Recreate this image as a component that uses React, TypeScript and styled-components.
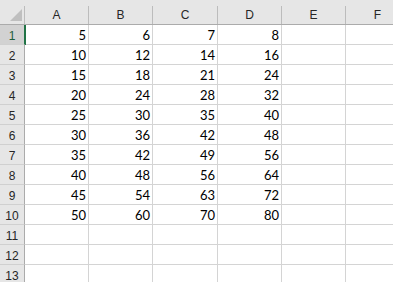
import styled, { createGlobalStyle } from "styled-components";

const GlobalStyle = createGlobalStyle`
  html, body {
    margin: 0;
    padding: 0;
    background: #ffffff;
    overflow: hidden;
  }
`;

const COLUMNS = [
  { label: "A", width: 64 },
  { label: "B", width: 64 },
  { label: "C", width: 65 },
  { label: "D", width: 64 },
  { label: "E", width: 64 },
  { label: "F", width: 64 },
];

const ROW_COUNT = 13;
const ACTIVE_ROW = 1;

// multiples of 5, 6, 7 and 8 in columns A to D
const cellValue = (row: number, col: number) =>
  row <= 10 && col < 4 ? String((col + 5) * row) : "";

export default function App() {
  const rows = Array.from({ length: ROW_COUNT }, (_, i) => i + 1);

  return (
    <>
      <GlobalStyle />
      <Sheet>
        <HeaderBar>
          <Corner>
            <SelectAll />
          </Corner>
          {COLUMNS.map((c) => (
            <ColHead key={c.label} $width={c.width}>
              {c.label}
            </ColHead>
          ))}
        </HeaderBar>
        {rows.map((r) => (
          <Row key={r}>
            <RowHead $active={r === ACTIVE_ROW}>{r}</RowHead>
            {COLUMNS.map((c, ci) => (
              <Cell key={c.label} $width={c.width}>
                {cellValue(r, ci)}
              </Cell>
            ))}
          </Row>
        ))}
      </Sheet>
    </>
  );
}

const Sheet = styled.div`
  width: 393px;
  height: 282px;
  overflow: hidden;
  display: flex;
  flex-direction: column;
  background: #ffffff;
`;

const HeaderBar = styled.div`
  display: flex;
  align-items: flex-end;
  flex: none;
  height: 25px;
  box-sizing: border-box;
  background: #e6e6e6;
  border-bottom: 1px solid #ababab;
`;

const Corner = styled.div`
  flex: none;
  width: 25px;
  height: 18px;
  box-sizing: border-box;
  border-right: 1px solid #bcbcbc;
  display: flex;
  align-items: flex-end;
  justify-content: flex-end;
  padding: 0 2px 3px 0;
`;

const SelectAll = styled.div`
  width: 0;
  height: 0;
  border-left: 12px solid transparent;
  border-bottom: 12px solid #bfbfbf;
`;

const ColHead = styled.div<{ $width: number }>`
  flex: none;
  width: ${(p) => p.$width}px;
  height: 18px;
  box-sizing: border-box;
  border-right: 1px solid #bcbcbc;
  display: flex;
  align-items: center;
  justify-content: center;
  font-family: "Liberation Sans", Arial, sans-serif;
  font-size: 12px;
  color: #262626;
  padding-bottom: 1px;
`;

const Row = styled.div`
  display: flex;
  flex: none;
  height: 20px;
`;

const RowHead = styled.div<{ $active?: boolean }>`
  flex: none;
  position: relative;
  z-index: 1;
  width: 25px;
  box-sizing: border-box;
  background: ${(p) => (p.$active ? "#d2d2d2" : "#e6e6e6")};
  border-right: 1px solid ${(p) => (p.$active ? "#217346" : "#ababab")};
  box-shadow: ${(p) => (p.$active ? "1px 0 0 #217346" : "none")};
  border-bottom: 1px solid #d0d0d0;
  display: flex;
  align-items: center;
  justify-content: center;
  font-family: "Liberation Sans", Arial, sans-serif;
  font-size: 12px;
  color: ${(p) => (p.$active ? "#1e5e3a" : "#262626")};
  padding-top: 2px;
`;

const Cell = styled.div<{ $width: number }>`
  flex: none;
  width: ${(p) => p.$width}px;
  box-sizing: border-box;
  border-right: 1px solid #d4d4d4;
  border-bottom: 1px solid #d4d4d4;
  display: flex;
  align-items: flex-end;
  justify-content: flex-end;
  padding: 0 2px 1px 0;
  font-family: Lato, "Liberation Sans", sans-serif;
  font-size: 13px;
  line-height: 16px;
  color: #000000;
`;
